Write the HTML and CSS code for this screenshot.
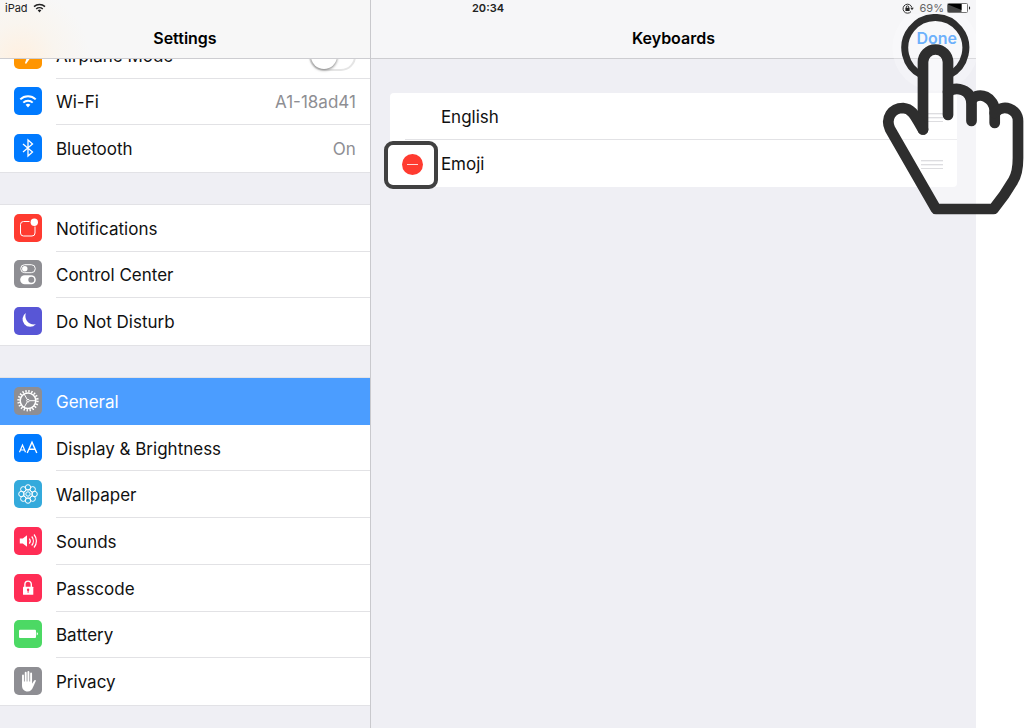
FILE: index.html
```html
<!DOCTYPE html>
<html lang="en">
<head>
<meta charset="utf-8">
<meta name="viewport" content="width=device-width, initial-scale=1">
<title>Keyboards</title>
<link rel="stylesheet" href="styles.css">
</head>
<body>
<div class="screen">
  <aside class="sidebar">
    <header class="bar bar-settings"><h1 class="title">Settings</h1></header>
    <nav class="menu">
      <div class="group">
        <label class="item">
          <svg class="icon" viewBox="0 0 28 28"><rect width="28" height="28" rx="5" fill="#ff9500"/><path d="M6 13l16-1-5 4-5 7-1-1 2-6z" fill="#fff"/></svg>
          <span class="line"><span class="name">Airplane Mode</span><input class="switch" type="checkbox"></span>
        </label>
        <a class="item" href="#wifi">
          <svg class="icon" viewBox="0 0 28 28"><rect width="28" height="28" rx="5" fill="#007aff"/><g fill="none" stroke="#fff" stroke-width="2"><path d="M6.3 12.4a11 11 0 0 1 15.4 0"/><path d="M9.3 15.6a6.8 6.8 0 0 1 9.4 0"/></g><path d="M11.6 17.8a3.5 3.5 0 0 1 4.8 0L14 20.5z" fill="#fff"/></svg>
          <span class="line"><span class="name">Wi-Fi</span><span class="value">A1-18ad41</span></span>
        </a>
        <a class="item" href="#bluetooth">
          <svg class="icon" viewBox="0 0 28 28"><rect width="28" height="28" rx="5" fill="#007aff"/><path d="M9 10l9.500 8-4.500 4V6l4.500 4L9 18" fill="none" stroke="#fff" stroke-width="1.300"/></svg>
          <span class="line"><span class="name">Bluetooth</span><span class="value">On</span></span>
        </a>
      </div>
      <div class="group">
        <a class="item" href="#notifications">
          <svg class="icon" viewBox="0 0 28 28"><rect width="28" height="28" rx="5" fill="#ff3b30"/><path d="M15.500 7.500H9.500a3 3 0 0 0-3 3V19a3 3 0 0 0 3 3H18a3 3 0 0 0 3-3v-6.500" fill="none" stroke="#fff" stroke-width="1"/><circle cx="20.300" cy="8.200" r="3.700" fill="#fff"/></svg>
          <span class="line"><span class="name">Notifications</span></span>
        </a>
        <a class="item" href="#control-center">
          <svg class="icon" viewBox="0 0 28 28"><rect width="28" height="28" rx="5" fill="#8e8e93"/><rect x="6.700" y="4.700" width="14.600" height="8" rx="4" fill="none" stroke="#fff"/><circle cx="10.800" cy="8.700" r="2.700" fill="#fff"/><rect x="6.200" y="15.300" width="15.600" height="9" rx="4.500" fill="#fff"/><circle cx="17.300" cy="19.800" r="3" fill="#8e8e93"/></svg>
          <span class="line"><span class="name">Control Center</span></span>
        </a>
        <a class="item" href="#do-not-disturb">
          <svg class="icon" viewBox="0 0 28 28"><rect width="28" height="28" rx="5" fill="#5856d6"/><path d="M11.800 6A7.600 7.600 0 1 0 21.800 17.300C15 18.500 9.800 12.500 11.800 6z" fill="#fff"/></svg>
          <span class="line"><span class="name">Do Not Disturb</span></span>
        </a>
      </div>
      <div class="group">
        <a class="item selected" href="#general" aria-current="page">
          <svg class="icon" viewBox="0 0 28 28"><rect width="28" height="28" rx="5" fill="#8e8e93"/><g fill="none" stroke="#fff"><circle cx="14" cy="13.700" r="9.500" stroke-width="2.400" stroke-dasharray="1.400 1.584"/><circle cx="14" cy="13.700" r="7.800" stroke-width="1.500"/><circle cx="14" cy="13.700" r="1.300"/><path d="M15.500 13.700h6.500M13.200 12.400L10 6.800M13.200 15L10 20.600"/></g></svg>
          <span class="line"><span class="name">General</span></span>
        </a>
        <a class="item" href="#display">
          <svg class="icon" viewBox="0 0 28 28"><rect width="28" height="28" rx="5" fill="#007aff"/><g fill="none" stroke="#fff"><path d="M5.500 18.300l3-7.300 3 7.300M6.500 16h4" stroke-width="1.200"/><path d="M13.200 19L18 8.300l4.800 10.700M15 15.300h6" stroke-width="1.400"/></g></svg>
          <span class="line"><span class="name">Display &amp; Brightness</span></span>
        </a>
        <a class="item" href="#wallpaper">
          <svg class="icon" viewBox="0 0 28 28"><rect width="28" height="28" rx="5" fill="#34aadc"/><g fill="none" stroke="#fff" stroke-width="1"><circle cx="14" cy="14" r="2.200"/><circle cx="14" cy="7.400" r="2.700"/><circle cx="18.700" cy="9.300" r="2.700"/><circle cx="20.600" cy="14" r="2.700"/><circle cx="18.700" cy="18.700" r="2.700"/><circle cx="14" cy="20.600" r="2.700"/><circle cx="9.300" cy="18.700" r="2.700"/><circle cx="7.400" cy="14" r="2.700"/><circle cx="9.300" cy="9.300" r="2.700"/><circle cx="14" cy="14" r="4.300"/></g></svg>
          <span class="line"><span class="name">Wallpaper</span></span>
        </a>
        <a class="item" href="#sounds">
          <svg class="icon" viewBox="0 0 28 28"><rect width="28" height="28" rx="5" fill="#ff2d55"/><path d="M5.800 11.500h3L13 8.300v11.400l-4.200-3.200h-3z" fill="#fff"/><g fill="none" stroke="#fff" stroke-width="1.200"><path d="M15.300 11.500a4 4 0 0 1 0 5M17.700 9.500a7 7 0 0 1 0 9M20 7.500a10 10 0 0 1 0 13"/></g></svg>
          <span class="line"><span class="name">Sounds</span></span>
        </a>
        <a class="item" href="#passcode">
          <svg class="icon" viewBox="0 0 28 28"><rect width="28" height="28" rx="5" fill="#ff2d55"/><rect x="9" y="12.700" width="10.300" height="8" rx="0.500" fill="#fff"/><path d="M10.900 13v-2.700a3.200 3.200 0 0 1 6.400 0V13" fill="none" stroke="#fff" stroke-width="1.400"/><circle cx="14.100" cy="15.800" r="1.200" fill="#ff2d55"/><path d="M14.100 16v2.800" stroke="#ff2d55"/></svg>
          <span class="line"><span class="name">Passcode</span></span>
        </a>
        <a class="item" href="#battery">
          <svg class="icon" viewBox="0 0 28 28"><rect width="28" height="28" rx="5" fill="#4cd964"/><rect x="5" y="9.700" width="17" height="8.300" rx="1" fill="#fff"/><path d="M22.700 12.300c1.700.4 1.700 2.700 0 3.100z" fill="#fff"/></svg>
          <span class="line"><span class="name">Battery</span></span>
        </a>
        <a class="item" href="#privacy">
          <svg class="icon" viewBox="0 0 28 28"><rect width="28" height="28" rx="5" fill="#8e8e93"/><g stroke="#fff" stroke-width="1.900" stroke-linecap="round"><path d="M9 8.500V16M11.700 5.800V16M14.400 5V16M17.100 6.500V16"/></g><path d="M8 14.500h10v2.300l2-3c.8-1.200 2.200-.7 1.700.5l-2.700 6c-1.100 2.700-2.500 4.200-5.300 4.200-3.600 0-5.700-2.500-5.700-6z" fill="#fff"/></svg>
          <span class="line"><span class="name">Privacy</span></span>
        </a>
      </div>
    </nav>
  </aside>
  <main class="detail">
    <header class="bar"><h2 class="title">Keyboards</h2><button class="done" type="button">Done</button></header>
    <ul class="keyboards">
      <li class="keyboard"><span class="control"></span><span class="line"><span class="name">English</span><span class="grip"></span></span></li>
      <li class="keyboard"><span class="control marked"><button class="remove" type="button" aria-label="Remove Emoji"></button></span><span class="line"><span class="name">Emoji</span><span class="grip"></span></span></li>
    </ul>
  </main>
  <div class="status">
    <span class="carrier">iPad <svg width="13" height="10" viewBox="0 0 13 10"><g fill="none" stroke="#222" stroke-width="1.500"><path d="M1 3.600a8 8 0 0 1 11 0"/><path d="M3.200 6a4.900 4.900 0 0 1 6.600 0"/></g><path d="M4.700 7.300a2.800 2.800 0 0 1 3.600 0L6.500 9.400z" fill="#222"/></svg></span>
    <time class="clock">20:34</time>
    <span class="power">
      <svg width="12" height="11" viewBox="0 0 12 11"><path d="M9 8.600A4.500 4.500 0 1 1 9.900 4.500" fill="none" stroke="#333"/><path d="M8.300 4.700h3.500L10 7.300z" fill="#333"/><rect x="3.400" y="4.800" width="4.200" height="3.200" fill="#222"/><path d="M4.300 5.200V4.100a1.200 1.200 0 0 1 2.400 0v1.100" fill="none" stroke="#222" stroke-width="0.900"/></svg>
      <span class="percent">69%</span>
      <svg width="24" height="10" viewBox="0 0 24 10"><rect x="0.500" y="0.500" width="20" height="9" rx="1" fill="#fff" stroke="#777"/><rect x="1" y="1" width="13.500" height="8" fill="#444"/><path d="M1 1.500L14.500 7V1H1z" fill="#000"/><path d="M22 3.200c1.600.6 1.600 3 0 3.600z" fill="#222"/></svg>
    </span>
  </div>
  <svg class="tap" width="142" height="202" viewBox="882 14 142 202" aria-hidden="true">
    <circle cx="935.300" cy="48" r="43" fill="#fff" fill-opacity="0.250"/>
    <path d="M922 75.400A30.500 30.500 0 1 1 948.600 75.400" fill="none" stroke="#2e2e2e" stroke-width="7"/>
    <path d="M923 129.500V62a12.500 12.500 0 0 1 25 0V93C955 87 969 87 971.500 99C979 91 993 97 994.700 111C1003 104 1017 108 1018 121V158Q1018 173 1013 181Q1005 195 993.500 209H936L890 129C885 118 892 108 903 108C914 109 916 119 923 129.500z" fill="#fff" fill-opacity="0.400"/>
    <g fill="none" stroke="#2e2e2e" stroke-width="10.700" stroke-linecap="round" stroke-linejoin="round">
      <path d="M923 129.500V62a12.500 12.500 0 0 1 25 0V115"/>
      <path d="M948 92C956 86 971.500 89 971.500 104V121"/>
      <path d="M971.500 100C979 90 994.700 98 994.700 111V123"/>
      <path d="M994.700 113C1003 103 1018 109 1018 121V158Q1018 173 1013 181Q1005 195 993.500 209H936L890 129C885 118 892 108 903 108C914 109 916 119 923 129.500"/>
    </g>
  </svg>
</div>
</body>
</html>
```
FILE: styles.css
```css
* { box-sizing: border-box; }
body {
  margin: 0;
  background: #fff;
  color: #111;
  font: 17px/24px Inter, "Liberation Sans", sans-serif;
}
.screen {
  position: relative;
  display: grid;
  grid-template-columns: 38% 1fr;
  min-height: 100vh;
  padding-right: 48px;
  overflow: hidden;
}
.sidebar, .detail { position: relative; background: #efeff4; }
.sidebar { border-right: 1px solid #c9c9cd; }
.bar {
  position: absolute;
  inset: 0 0 auto;
  height: 59px;
  padding-top: 26px;
  border-bottom: 1px solid #cdcdd1;
  background: #f6f6f8;
  text-align: center;
}
.bar-settings {
  background: radial-gradient(circle at 20px 59px, #fff0e0 0, #f9f5ef 36px, #f7f7f7 70px);
}
.title { margin: 0; font-size: 16px; line-height: 24px; font-weight: 600; color: #000; }
.done {
  position: absolute;
  right: 19px;
  top: 26px;
  padding: 0;
  border: 0;
  background: none;
  color: #3c97fb;
  font: inherit;
  font-size: 16px;
  font-weight: 600;
}

.menu { display: flex; flex-direction: column; gap: 33px; padding-top: 32px; }
.group {
  display: grid;
  grid-auto-rows: 1fr;
  background: #fff;
  box-shadow: 0 -1px #e2e2e6, 0 1px #e2e2e6;
}
.group:not(:last-child) { height: 140px; }
.group:last-child { height: 327px; }
.item {
  display: flex;
  align-items: center;
  gap: 14px;
  padding-left: 14px;
  color: inherit;
  text-decoration: none;
}
.icon { flex: none; width: 28px; height: 28px; margin-bottom: 1px; }
.line {
  flex: 1;
  align-self: stretch;
  display: flex;
  align-items: center;
  justify-content: space-between;
  padding: 2px 14px 0 0;
  border-bottom: 1px solid #e2e2e5;
}
.item:last-child .line, .keyboard .line, .selected .line { border-bottom-color: transparent; }
.value { color: #8e8e93; }
.selected { background: #4b9dff; color: #fff; }
.switch {
  appearance: none;
  width: 47px;
  height: 30px;
  margin: 0;
  border: 2px solid #e5e5e5;
  border-radius: 15px;
  background: #fff;
}
.switch::before {
  content: "";
  display: block;
  width: 26px;
  height: 26px;
  border-radius: 50%;
  background: #fff;
  box-shadow: 0 1px 3px #777;
}

.keyboards {
  list-style: none;
  margin: 93px 19px 0 19px;
  padding: 0;
  border-radius: 4px;
  background: #fff;
}
.keyboard { display: flex; height: 47px; }
.keyboard:first-child {
  background: linear-gradient(#e2e2e5, #e2e2e5) 15px 100% / 100% 1px no-repeat;
}
.control { flex: none; width: 51px; }
.marked { display: grid; place-items: center; position: relative; }
.marked::before {
  content: "";
  position: absolute;
  inset: 1px 3px -2px -6px;
  border: 4px solid #414141;
  border-radius: 9px;
  background: #fff;
}
.remove {
  position: relative;
  width: 21px;
  height: 21px;
  margin: 2px 6px 0 0;
  padding: 0;
  border: 0;
  border-radius: 50%;
  background: linear-gradient(#ffd8d6, #ffd8d6) center / 11px 1px no-repeat #ff3b30;
}
.grip {
  width: 22px;
  height: 9px;
  background: repeating-linear-gradient(#c7c7cc 0 1px, #ececee 1px 2px, transparent 2px 4px);
}

.status {
  position: absolute;
  inset: 0 53px auto 5px;
  display: grid;
  grid-template-columns: 1fr auto 1fr;
  font-size: 11px;
  line-height: 16px;
  color: #222;
}
.carrier, .power { display: flex; align-items: center; gap: 5px; }
.power { justify-content: flex-end; gap: 6px; }
.percent { color: #666; }
.power svg:last-child { margin-left: -3px; }
.clock { font-weight: 600; }
.tap { position: absolute; right: 0; top: 14px; pointer-events: none; }
```
